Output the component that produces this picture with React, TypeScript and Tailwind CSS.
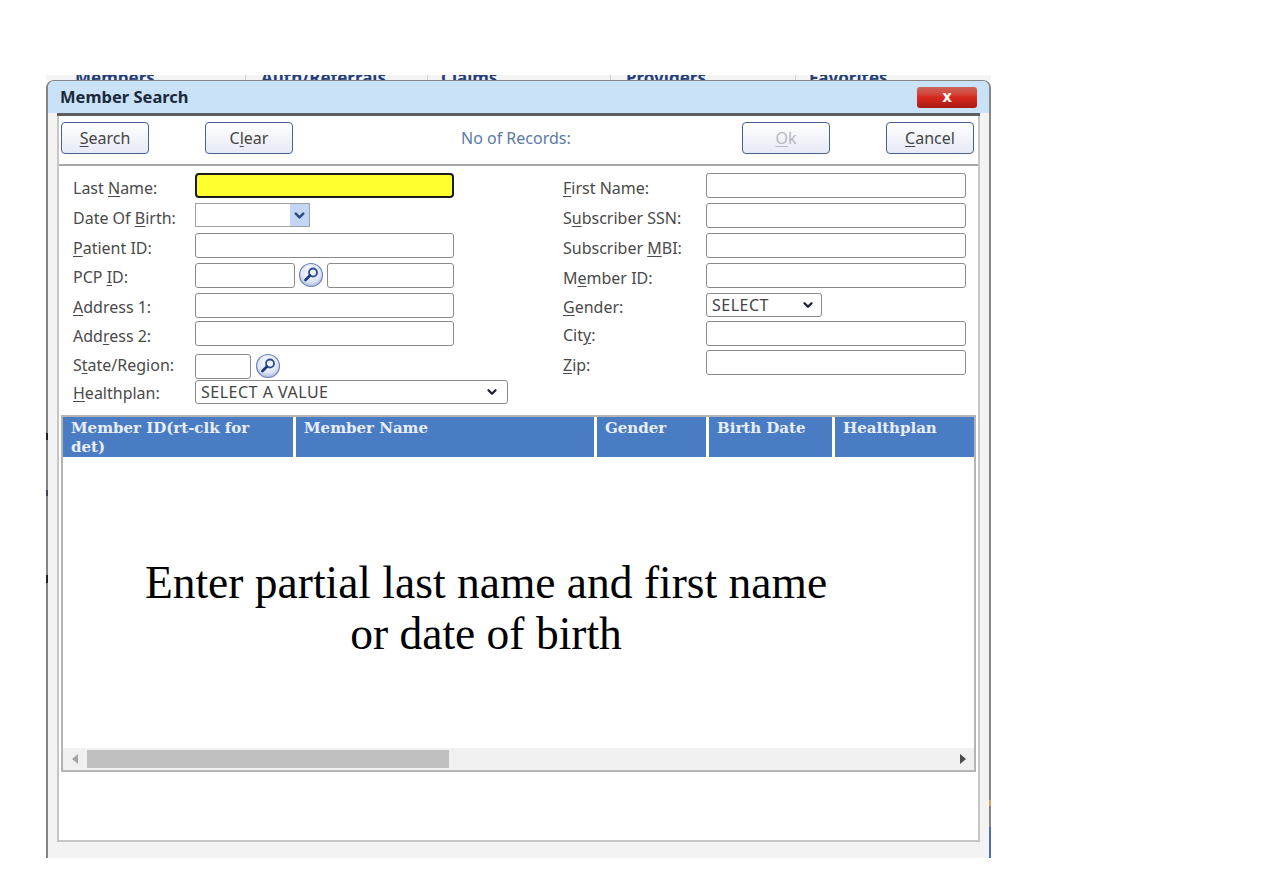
import { ChevronDown } from 'lucide-react'

const uiFont = "font-['Noto_Sans',sans-serif]"
const inputClass = 'h-[25px] rounded-[3px] border border-[#8a8a8a] bg-white outline-none'

function Key({ children }: { children: string }) {
  return <span className="underline underline-offset-2">{children}</span>
}

function LookupIcon() {
  return (
    <svg width="26" height="26" viewBox="0 0 26 26" className="shrink-0">
      <defs>
        <radialGradient id="lookupFill" cx="50%" cy="35%" r="65%">
          <stop offset="0%" stopColor="#ffffff" />
          <stop offset="70%" stopColor="#dbe3f4" />
          <stop offset="100%" stopColor="#a9b8dc" />
        </radialGradient>
      </defs>
      <circle cx="13" cy="13" r="11.5" fill="url(#lookupFill)" stroke="#6f84b8" strokeWidth="1.2" />
      <circle cx="15" cy="10.5" r="4" fill="#eef2fb" stroke="#2f4b8f" strokeWidth="1.8" />
      <path d="M12 13.5 L7.5 18" stroke="#1f3a7a" strokeWidth="2.8" strokeLinecap="round" />
    </svg>
  )
}

function Button({ children, disabled, className }: { children: React.ReactNode; disabled?: boolean; className: string }) {
  return (
    <button
      className={`h-[32px] w-[88px] rounded-[4px] border border-[#46618f] bg-linear-to-b from-white to-[#e6eaf4] text-[16px] ${uiFont} ${
        disabled ? 'text-[#b4b8c0]' : 'text-[#444]'
      } ${className}`}
    >
      {children}
    </button>
  )
}

function SelectBox({ value, width, chevron }: { value: string; width: string; chevron: string }) {
  return (
    <div className={`relative h-[24px] ${width}`}>
      <select className={`h-[24px] w-full appearance-none rounded-[3px] border border-[#8a8a8a] bg-white pl-[5px] text-[16px] leading-[20px] tracking-[0.5px] text-[#444] outline-none ${uiFont}`}>
        <option>{value}</option>
      </select>
      <ChevronDown size={14} strokeWidth={4} className={`pointer-events-none absolute top-[5px] text-[#1e2433] ${chevron}`} />
    </div>
  )
}

function Row({
  label,
  height,
  labelWidth = 'w-[122px]',
  labelPad = 'pt-[5px]',
  children,
}: {
  label: React.ReactNode
  height: string
  labelWidth?: string
  labelPad?: string
  children: React.ReactNode
}) {
  return (
    <div className={`flex items-start ${height}`}>
      <label className={`shrink-0 text-[16px] leading-[20px] text-[#4a4a4a] ${labelWidth} ${labelPad}`}>{label}</label>
      {children}
    </div>
  )
}

function Scrollbar() {
  return (
    <div className="flex h-[22px] shrink-0 items-center bg-[#f0f0f0]">
      <div className="flex w-[24px] justify-center">
        <div className="h-0 w-0 border-y-[5px] border-r-[6px] border-y-transparent border-r-[#a3a3a3]" />
      </div>
      <div className="h-[18px] w-[362px] bg-[#c0c0c0]" />
      <div className="flex-1" />
      <div className="flex w-[22px] justify-center">
        <div className="h-0 w-0 border-y-[5px] border-l-[6px] border-y-transparent border-l-[#4a4a4a]" />
      </div>
    </div>
  )
}

export default function App() {
  const columns = ['Member ID(rt-clk for det)', 'Member Name', 'Gender', 'Birth Date', 'Healthplan']

  return (
    <div className={`min-h-[887px] bg-white pl-[46px] pt-[75px] ${uiFont}`}>
      {/* 背面のメニュー（ダイアログで隠れている） */}
      <div className="h-[5px] w-[945px] overflow-hidden bg-[#f4f4f4]">
        <div className="-mt-[7px] flex text-[17px] font-bold leading-[20px] text-[#24407c]">
          <span className="w-[199px] pl-[29px]">Members</span>
          <span className="w-[182px] border-l border-[#cfcfcf] pl-[15px]">Auth/Referrals</span>
          <span className="w-[183px] border-l border-[#cfcfcf] pl-[13px]">Claims</span>
          <span className="w-[185px] border-l border-[#cfcfcf] pl-[15px]">Providers</span>
          <span className="border-l border-[#cfcfcf] pl-[13px]">Favorites</span>
        </div>
      </div>

      {/* ダイアログ */}
      <div className="relative h-[778px] w-[945px]">
        <div className="flex h-full flex-col overflow-hidden rounded-t-[8px] border-x-2 border-t border-b-0 border-[#858585] bg-[#f3f3f3]">
          <div className="flex h-[32px] shrink-0 items-center justify-between bg-[#c9e2f8] pl-[12px] pr-[12px]">
            <span className="text-[16.5px] font-bold text-[#1a2a3a]">Member Search</span>
            <div className="mt-[1px] flex h-[21px] w-[60px] items-center justify-center rounded-[3px] bg-linear-to-b from-[#c9655c] via-[#d8281e] to-[#a81c14]">
              <span className="text-[15px] font-bold leading-none text-white font-['DejaVu_Sans',sans-serif]">x</span>
            </div>
          </div>

          <div className="mx-[9px] flex flex-col">
            <div className="h-[3px] shrink-0 bg-[#5c5f62]" />
            <div className="flex h-[726px] flex-col border-x-2 border-b-2 border-[#c6c6c6] bg-white">
              {/* ツールバー */}
              <div className="flex h-[50px] shrink-0 items-center border-b-2 border-[#a8a8a8] pb-[4px] pl-[2px]">
                <Button className="">
                  <Key>S</Key>earch
                </Button>
                <Button className="ml-[56px]">
                  C<Key>l</Key>ear
                </Button>
                <span className="ml-[168px] w-[168px] text-[16px] text-[#5b7aa6]">No of Records:</span>
                <Button disabled className="ml-[113px]">
                  <Key>O</Key>k
                </Button>
                <Button className="ml-[56px]">
                  <Key>C</Key>ancel
                </Button>
              </div>

              {/* 検索条件 */}
              <div className="flex pl-[14px] pt-[7px]">
                <div className="w-[490px] shrink-0">
                  <Row label={<>Last <Key>N</Key>ame:</>} height="h-[30px]">
                    <input readOnly className="h-[25px] w-[259px] rounded-[4px] border-2 border-[#1c1c1c] bg-[#ffff2e] outline-none" />
                  </Row>
                  <Row label={<>Date Of <Key>B</Key>irth:</>} height="h-[30px]">
                    <div className="flex h-[24px] w-[115px] border border-[#a0a0a0] bg-white">
                      <div className="flex-1" />
                      <div className="flex w-[19px] items-center justify-center bg-[#c3d6f6]">
                        <ChevronDown size={15} strokeWidth={4} className="text-[#2f4a80]" />
                      </div>
                    </div>
                  </Row>
                  <Row label={<><Key>P</Key>atient ID:</>} height="h-[30px]">
                    <input readOnly className={`${inputClass} w-[259px]`} />
                  </Row>
                  <Row label={<>PCP <Key>I</Key>D:</>} height="h-[30px]" labelPad="pt-[4px]">
                    <input readOnly className={`${inputClass} w-[100px]`} />
                    <div className="ml-[3px] -mt-[1px]">
                      <LookupIcon />
                    </div>
                    <input readOnly className={`${inputClass} ml-[3px] w-[127px]`} />
                  </Row>
                  <Row label={<><Key>A</Key>ddress 1:</>} height="h-[28px]" labelPad="pt-[4px]">
                    <input readOnly className={`${inputClass} w-[259px]`} />
                  </Row>
                  <Row label={<>Add<Key>r</Key>ess 2:</>} height="h-[33px]">
                    <input readOnly className={`${inputClass} w-[259px]`} />
                  </Row>
                  <Row label={<>S<Key>t</Key>ate/Region:</>} height="h-[26px]" labelPad="pt-[1px]">
                    <input readOnly className={`${inputClass} w-[56px]`} />
                    <div className="ml-[4px] -mt-[1px]">
                      <LookupIcon />
                    </div>
                  </Row>
                  <Row label={<><Key>H</Key>ealthplan:</>} height="h-[24px]" labelPad="pt-[3px]">
                    <SelectBox value="SELECT A VALUE" width="w-[313px]" chevron="right-[9px]" />
                  </Row>
                </div>

                <div className="w-[403px] shrink-0">
                  <Row label={<><Key>F</Key>irst Name:</>} height="h-[30px]" labelWidth="w-[143px]">
                    <input readOnly className={`${inputClass} w-[260px]`} />
                  </Row>
                  <Row label={<>S<Key>u</Key>bscriber SSN:</>} height="h-[30px]" labelWidth="w-[143px]">
                    <input readOnly className={`${inputClass} w-[260px]`} />
                  </Row>
                  <Row label={<>Subscriber <Key>M</Key>BI:</>} height="h-[30px]" labelWidth="w-[143px]">
                    <input readOnly className={`${inputClass} w-[260px]`} />
                  </Row>
                  <Row label={<>M<Key>e</Key>mber ID:</>} height="h-[30px]" labelWidth="w-[143px]">
                    <input readOnly className={`${inputClass} w-[260px]`} />
                  </Row>
                  <Row label={<><Key>G</Key>ender:</>} height="h-[28px]" labelWidth="w-[143px]" labelPad="pt-[4px]">
                    <SelectBox value="SELECT" width="w-[116px]" chevron="right-[7px]" />
                  </Row>
                  <Row label={<>Cit<Key>y</Key>:</>} height="h-[29px]" labelWidth="w-[143px]" labelPad="pt-[4px]">
                    <input readOnly className={`${inputClass} w-[260px]`} />
                  </Row>
                  <Row label={<><Key>Z</Key>ip:</>} height="h-[25px]" labelWidth="w-[143px]">
                    <input readOnly className={`${inputClass} w-[260px]`} />
                  </Row>
                </div>
              </div>

              {/* 検索結果 */}
              <div className="ml-[2px] mt-[11px] flex h-[357px] w-[915px] flex-col border-2 border-[#b4b4b4]">
                <div className="grid h-[40px] shrink-0 grid-cols-[230px_298px_109px_123px_139px] gap-x-[3px] text-[15px] font-bold leading-[19px] text-[#e8eef8] font-['DejaVu_Serif',serif]">
                  {columns.map((col) => (
                    <div key={col} className="bg-[#4a7cc4] pl-[8px] pr-[10px] pt-[2px]">
                      {col}
                    </div>
                  ))}
                </div>
                <div className="flex-1 pr-[65px] pt-[100px] text-center text-[45.5px] leading-[51px] text-black font-['Liberation_Serif',serif]">
                  Enter partial last name and first name
                  <br />
                  or date of birth
                </div>
                <Scrollbar />
              </div>
            </div>
          </div>
        </div>

        {/* 枠線に重なる背面ページの端 */}
        <div className="absolute left-0 top-[353px] h-[7px] w-[2px] bg-[#222]" />
        <div className="absolute left-0 top-[410px] h-[6px] w-[2px] bg-[#445]" />
        <div className="absolute left-0 top-[495px] h-[8px] w-[2px] bg-[#222]" />
        <div className="absolute right-0 top-[720px] h-[6px] w-[2px] bg-[#d9a25f]" />
        <div className="absolute right-0 top-[747px] h-[31px] w-[2px] bg-[#4a6fb0]" />
      </div>
    </div>
  )
}
